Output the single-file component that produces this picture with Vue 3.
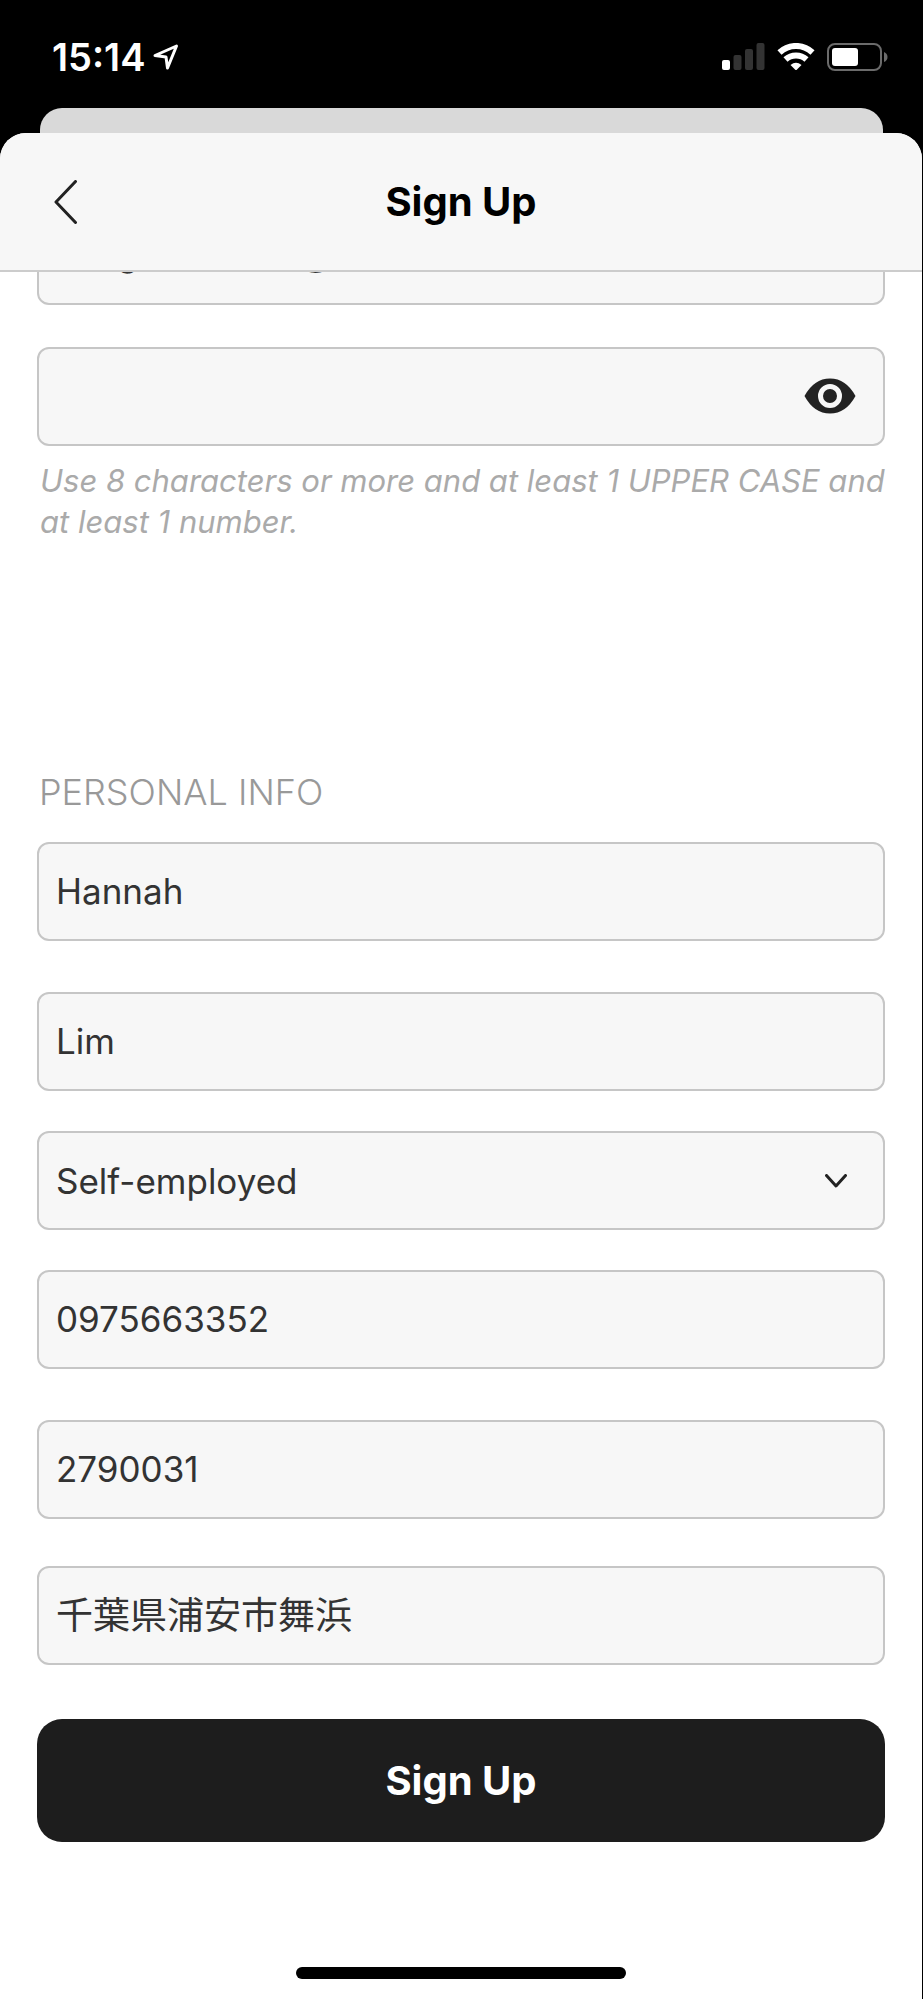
<script setup>
import { ref } from 'vue'

const email = ref('hanglimmoons@ma.co')
const password = ref('')
const passwordVisible = ref(false)
const firstName = ref('Hannah')
const lastName = ref('Lim')
const occupation = ref('Self-employed')
const occupations = ['Self-employed', 'Employed', 'Student']
const phone = ref('0975663352')
const postcode = ref('2790031')
const address = ref('千葉県浦安市舞浜')
</script>

<template>
  <div class="screen">
    <div class="status">
      <div class="clock">
        <time>15:14</time>
        <svg class="location" width="26" height="26" viewBox="0 0 26 26" aria-hidden="true">
          <path d="M2 11.500 L23.500 2 L14.500 24 L13 13 Z" />
        </svg>
      </div>
      <div class="indicators">
        <svg width="43" height="28" viewBox="0 0 43 28" aria-hidden="true">
          <rect x="0" y="17" width="8" height="10" rx="2" fill="#fff" />
          <rect x="11.500" y="12" width="8" height="15" rx="2" fill="#333" />
          <rect x="23" y="6" width="8" height="21" rx="2" fill="#333" />
          <rect x="34.500" y="0" width="8" height="27" rx="2" fill="#333" />
        </svg>
        <svg width="38" height="28" viewBox="0 0 38 28" aria-hidden="true">
          <path d="M2.500 9.500 A24 24 0 0 1 35.500 9.500" class="wave" />
          <path d="M8.500 16.500 A15.500 15.500 0 0 1 29.500 16.500" class="wave" />
          <path d="M13.500 22 Q19 17.500 24.500 22 L20 26.500 Q19 27.500 18 26.500 Z" fill="#fff" />
        </svg>
        <svg width="62" height="28" viewBox="0 0 62 28" aria-hidden="true">
          <rect x="1" y="1" width="53" height="26" rx="7" fill="none" stroke="#6b6b6b" stroke-width="2" />
          <rect x="5" y="5" width="26" height="18" rx="3" fill="#fff" />
          <path d="M57 9 Q60.500 10.500 60.500 14 Q60.500 17.500 57 19 Z" fill="#6b6b6b" />
        </svg>
      </div>
    </div>

    <div class="sheet-behind"></div>

    <main class="sheet">
      <header class="bar">
        <button type="button" class="back" aria-label="Back">
          <svg width="24" height="44" viewBox="0 0 24 44" aria-hidden="true">
            <path d="M21.500 1.500 L2 22 L21.500 42.500" />
          </svg>
        </button>
        <h1>Sign Up</h1>
      </header>

      <form class="form" @submit.prevent>
        <input v-model="email" class="field email" type="text" aria-label="Email" />

        <div class="with-icon">
          <input
            v-model="password"
            class="field"
            :type="passwordVisible ? 'text' : 'password'"
            aria-label="Password"
            aria-describedby="password-hint"
          />
          <button
            type="button"
            class="eye"
            aria-label="Show password"
            @click="passwordVisible = !passwordVisible"
          >
            <svg width="52" height="36" viewBox="0 0 52 36" aria-hidden="true">
              <path d="M0.500 18 Q10 0.500 26 0.500 Q42 0.500 51.500 18 Q42 35.500 26 35.500 Q10 35.500 0.500 18 Z" fill="#222" />
              <circle cx="26" cy="18" r="9.500" fill="#222" stroke="#f7f7f7" stroke-width="5" />
            </svg>
          </button>
        </div>
        <p id="password-hint" class="hint">
          Use 8 characters or more and at least 1 UPPER CASE and at least 1 number.
        </p>

        <h2>PERSONAL INFO</h2>
        <input v-model="firstName" class="field" type="text" aria-label="First name" />
        <input v-model="lastName" class="field space-l" type="text" aria-label="Last name" />
        <div class="with-icon space-s">
          <select v-model="occupation" class="field" aria-label="Occupation">
            <option v-for="item in occupations" :key="item">{{ item }}</option>
          </select>
          <svg class="chevron" width="22" height="14" viewBox="0 0 22 14" aria-hidden="true">
            <path d="M1.500 1.500 L11 12 L20.500 1.500" />
          </svg>
        </div>
        <input v-model="phone" class="field space-s" type="tel" aria-label="Phone number" />
        <input v-model="postcode" class="field space-l" type="text" aria-label="Postal code" />
        <input v-model="address" class="field address space-m" type="text" aria-label="Address" />

        <button type="submit" class="submit">Sign Up</button>
      </form>

      <div class="home-indicator"></div>
    </main>
  </div>
</template>

<style>
body {
  background: #000;
}
</style>

<style scoped>
.screen {
  display: flex;
  flex-direction: column;
  min-height: 100vh;
  box-sizing: border-box;
  padding-right: 1px;
  background: #000;
  font-family: Inter, "Noto Sans CJK JP", sans-serif;
}

.status {
  display: flex;
  justify-content: space-between;
  align-items: center;
  height: 108px;
  padding: 6px 33px 0 52px;
  box-sizing: border-box;
  color: #fff;
}

.clock {
  display: flex;
  align-items: center;
  gap: 8px;
  font-size: 38px;
  line-height: 44px;
  font-weight: 600;
}

.location path {
  fill: none;
  stroke: #fff;
  stroke-width: 3;
  stroke-linejoin: round;
}

.indicators {
  display: flex;
  align-items: center;
  gap: 12px;
}

.wave {
  fill: none;
  stroke: #fff;
  stroke-width: 6;
}

.sheet-behind {
  height: 25px;
  margin: 0 39px 0 40px;
  border-radius: 22px 22px 0 0;
  background: #d9d9d9;
}

.sheet {
  flex: 1;
  display: flex;
  flex-direction: column;
  border-radius: 26px 26px 0 0;
  background: #fff;
  overflow: hidden;
}

.bar {
  display: grid;
  grid-template-columns: 80px 1fr 80px;
  align-items: center;
  height: 139px;
  box-sizing: border-box;
  border-bottom: 2px solid #ccc;
  background: #f7f7f7;
}

.back {
  padding: 0 0 0 54px;
  border: 0;
  background: none;
}

.back svg {
  display: block;
}

.back path,
.chevron path {
  fill: none;
  stroke: #222;
  stroke-width: 3;
  stroke-linecap: round;
  stroke-linejoin: round;
}

h1 {
  margin: 0;
  font-size: 40px;
  line-height: 48px;
  font-weight: 700;
  text-align: center;
  color: #000;
}

.form {
  display: flex;
  flex-direction: column;
  padding: 0 37px;
  overflow: hidden;
}

.field {
  display: block;
  width: 100%;
  height: 99px;
  box-sizing: border-box;
  padding: 0 17px 2px;
  border: 2px solid #c6c6c6;
  border-radius: 12px;
  background: #f7f7f7;
  color: #333;
  font-family: inherit;
  font-size: 35px;
  font-weight: 400;
  appearance: none;
  flex-shrink: 0;
}

select.field {
  padding-bottom: 0;
}

.address {
  padding-bottom: 6px;
  font-family: "Noto Sans CJK JP", sans-serif;
  font-size: 37px;
}

.email {
  margin-top: -66px;
  margin-bottom: 42px;
  padding-bottom: 6px;
}

.space-s {
  margin-top: 40px;
}

.space-m {
  margin-top: 47px;
}

.space-l {
  margin-top: 51px;
}

.with-icon {
  position: relative;
}

.eye {
  position: absolute;
  top: 0;
  right: 29px;
  bottom: 2px;
  padding: 0;
  border: 0;
  background: none;
}

.eye svg {
  display: block;
}

.chevron {
  position: absolute;
  top: 43px;
  right: 38px;
  pointer-events: none;
}

.hint {
  margin: 14px 0 0;
  padding: 0 0 0 3px;
  font-size: 31px;
  line-height: 41px;
  font-style: italic;
  color: #aaa;
}

h2 {
  margin: 227px 0 27px;
  padding-left: 2px;
  font-size: 36px;
  line-height: 46px;
  font-weight: 300;
  color: #999;
}

.submit {
  height: 123px;
  margin-top: 54px;
  padding: 0;
  border: 0;
  border-radius: 25px;
  background: #1d1d1d;
  color: #fff;
  font-family: inherit;
  font-size: 40px;
  font-weight: 700;
}

.home-indicator {
  width: 36%;
  max-width: 330px;
  height: 12px;
  margin: auto auto 20px;
  border-radius: 6px;
  background: #000;
}
</style>
